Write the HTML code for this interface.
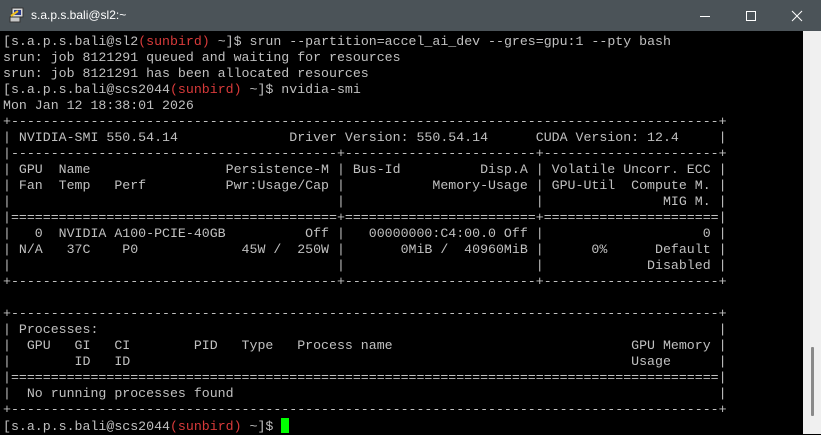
<!DOCTYPE html>
<html><head><meta charset="utf-8"><style>
html,body{margin:0;padding:0;width:821px;height:434px;overflow:hidden;background:#000;}
#title{position:absolute;left:0;top:0;width:821px;height:31px;background:#4b5358;}
#title span{position:absolute;left:31px;top:8px;color:#fff;font:12px "Liberation Sans",sans-serif;}
#term{position:absolute;left:3px;top:34px;margin:0;color:#c0c0c0;font:13.25px/16px "Liberation Mono",monospace;white-space:pre;}
.r{color:#d83a3a;}
.cur{display:inline-block;width:8px;height:15px;background:#00ff00;vertical-align:-3px;}
#sb{position:absolute;left:803px;top:31px;width:18px;height:403px;background:#f0f0f0;}
#thumb{position:absolute;left:811px;top:347px;width:3px;height:69px;background:#8a8a8a;border-radius:1px;}
</style></head><body>
<div id="title">
<svg style="position:absolute;left:9px;top:7px" width="16" height="16" viewBox="0 0 16 16">
<rect x="3" y="1" width="11" height="9" fill="#d8d8d8" stroke="#333" stroke-width="1"/>
<rect x="5" y="3" width="7" height="5" fill="#2a3a90"/>
<rect x="1" y="10" width="10" height="5" fill="#c8c8c8" stroke="#333" stroke-width="1"/>
<path d="M2 9 L9 4" stroke="#f0c020" stroke-width="2"/>
</svg>
<span>s.a.p.s.bali@sl2:~</span>
<svg style="position:absolute;left:700px;top:10px" width="110" height="12" viewBox="0 0 110 12">
<path d="M0 6.5 H10" stroke="#fff" stroke-width="1"/>
<rect x="46.5" y="1.5" width="9" height="9" fill="none" stroke="#fff" stroke-width="1"/>
<path d="M92 1 L102 11 M102 1 L92 11" stroke="#fff" stroke-width="1"/>
</svg>
</div>
<pre id="term">[s.a.p.s.bali@sl2<span class="r">(sunbird)</span> ~]$ srun --partition=accel_ai_dev --gres=gpu:1 --pty bash
srun: job 8121291 queued and waiting for resources
srun: job 8121291 has been allocated resources
[s.a.p.s.bali@scs2044<span class="r">(sunbird)</span> ~]$ nvidia-smi
Mon Jan 12 18:38:01 2026
+-----------------------------------------------------------------------------------------+
| NVIDIA-SMI 550.54.14              Driver Version: 550.54.14      CUDA Version: 12.4     |
|-----------------------------------------+------------------------+----------------------+
| GPU  Name                 Persistence-M | Bus-Id          Disp.A | Volatile Uncorr. ECC |
| Fan  Temp   Perf          Pwr:Usage/Cap |           Memory-Usage | GPU-Util  Compute M. |
|                                         |                        |               MIG M. |
|=========================================+========================+======================|
|   0  NVIDIA A100-PCIE-40GB          Off |   00000000:C4:00.0 Off |                    0 |
| N/A   37C    P0             45W /  250W |       0MiB /  40960MiB |      0%      Default |
|                                         |                        |             Disabled |
+-----------------------------------------+------------------------+----------------------+

+-----------------------------------------------------------------------------------------+
| Processes:                                                                              |
|  GPU   GI   CI        PID   Type   Process name                              GPU Memory |
|        ID   ID                                                               Usage      |
|=========================================================================================|
|  No running processes found                                                             |
+-----------------------------------------------------------------------------------------+
[s.a.p.s.bali@scs2044<span class="r">(sunbird)</span> ~]$ <span class="cur"></span></pre>
<div id="sb"></div><div id="thumb"></div>
</body></html>
